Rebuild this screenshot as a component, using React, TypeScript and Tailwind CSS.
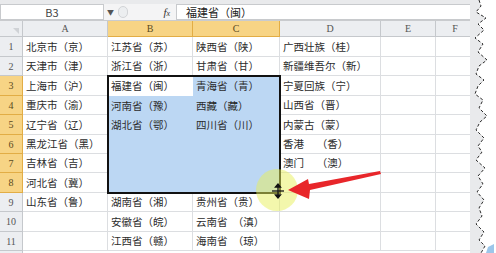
import React from "react";

type Row = { n: number; h: string; cells: string[] };

const cols = [
  { key: "A", w: "w-[85px]" },
  { key: "B", w: "w-[85px]" },
  { key: "C", w: "w-[87px]" },
  { key: "D", w: "w-[101px]" },
  { key: "E", w: "w-[55px]" },
  { key: "F", w: "w-[39px]" },
];

const rows: Row[] = [
  { n: 1, h: "h-[20px]", cells: ["北京市（京）", "江苏省（苏）", "陕西省（陕）", "广西壮族（桂）"] },
  { n: 2, h: "h-[19px]", cells: ["天津市（津）", "浙江省（浙）", "甘肃省（甘）", "新疆维吾尔（新）"] },
  { n: 3, h: "h-[20px]", cells: ["上海市（沪）", "福建省（闽）", "青海省（青）", "宁夏回族（宁）"] },
  { n: 4, h: "h-[19px]", cells: ["重庆市（渝）", "河南省（豫）", "西藏（藏）", "山西省（晋）"] },
  { n: 5, h: "h-[20px]", cells: ["辽宁省（辽）", "湖北省（鄂）", "四川省（川）", "内蒙古（蒙）"] },
  { n: 6, h: "h-[19px]", cells: ["黑龙江省（黑）", "", "", "香港\u3000 （香）"] },
  { n: 7, h: "h-[19px]", cells: ["吉林省（吉）", "", "", "澳门\u3000 （澳）"] },
  { n: 8, h: "h-[20px]", cells: ["河北省（冀）", "", "", ""] },
  { n: 9, h: "h-[19px]", cells: ["山东省（鲁）", "湖南省（湘）", "贵州省（贵）", ""] },
  { n: 10, h: "h-[20px]", cells: ["", "安徽省（皖）", "云南省\u3000（滇）", ""] },
  { n: 11, h: "h-[19px]", cells: ["", "江西省（赣）", "海南省\u3000（琼）", ""] },
];

function isSelected(r: number, c: number) {
  return r >= 3 && r <= 8 && (c === 1 || c === 2);
}

function FormulaBar() {
  return (
    <div className="flex h-[21px] w-[475px] items-stretch bg-[#e9eaec] pt-[4px] border-b border-[#c9cbce]">
      <div className="flex w-[104px] items-center justify-center border border-[#c8cacd] bg-white text-[11px] text-[#444]">
        B3
      </div>
      <div className="flex w-[72px] items-center bg-[#f4f4f5]">
        <span className="ml-[3px] text-[7px] text-[#555]">▼</span>
        <span className="ml-[4px] h-[12px] w-[10px] rounded-full border border-[#d2d4d7] bg-[#eceef0]" />
        <span className="ml-auto mr-[6px] font-['Liberation_Serif',serif] text-[11px] italic text-[#333]">
          f<span className="text-[8px]">x</span>
        </span>
      </div>
      <div className="flex flex-1 items-center border border-[#c8cacd] bg-white pl-[9px] text-[11px] text-[#222]">
        福建省（闽）
      </div>
    </div>
  );
}

function HeaderRow() {
  return (
    <div className="flex h-[16px]">
      <div className="flex w-[23px] items-end justify-end border-r border-b border-[#c5c8cc] bg-[#eceef1] pb-[2px] pr-[3px]">
        <span className="h-0 w-0 border-l-[6px] border-t-[6px] border-l-transparent border-t-[#cfd2d6]" />
      </div>
      {cols.map((c, i) => (
        <div
          key={c.key}
          className={
            c.w +
            " flex items-center justify-center border-r border-b font-['Liberation_Serif',serif] text-[10px] " +
            (i === 1 || i === 2
              ? "border-[#e2ad45] bg-[#f7d485] text-[#5a4a1e]"
              : "border-[#c5c8cc] bg-[#eceef1] text-[#555]")
          }
        >
          {c.key}
        </div>
      ))}
    </div>
  );
}

function SheetRow({ row }: { row: Row }) {
  const hl = row.n >= 3 && row.n <= 8;
  return (
    <div className={"flex " + row.h}>
      <div
        className={
          "flex w-[23px] items-center justify-center border-r border-b font-['Liberation_Serif',serif] text-[10px] " +
          (hl ? "border-[#e2ad45] bg-[#f7d485] text-[#5a4a1e]" : "border-[#c5c8cc] bg-[#eceef1] text-[#555]")
        }
      >
        {row.n}
      </div>
      {cols.map((c, ci) => {
        const sel = isSelected(row.n, ci) && !(row.n === 3 && ci === 1);
        return (
          <div
            key={c.key}
            className={
              c.w +
              " flex items-center overflow-visible whitespace-pre pl-[3px] text-[10.5px] text-[#2b2b2b] " +
              (sel ? "bg-[#bcd7f3] " : "bg-white ") +
              (isSelected(row.n, ci) ? "" : "border-r border-b border-[#dcdee1]")
            }
          >
            {row.cells[ci] ?? ""}
          </div>
        );
      })}
    </div>
  );
}

function TornEdge() {
  const pts =
    "479,0 481,6 476,12 486,18 478,24 484,30 475,38 483,44 478,52 487,60 479,66 476,74 484,80 478,86 475,94 483,100 479,108 487,116 480,122 476,130 484,138 478,146 482,152 476,160 485,168 478,176 483,184 477,192 484,200 479,208 482,216 476,224 484,232 479,240 485,246 481,253";
  return (
    <svg className="absolute right-0 top-0" width="496" height="253" viewBox="0 0 496 253">
      <polygon points={"470,0 " + pts + " 470,253"} fill="#e9eaec" />
      <polygon points={pts + " 496,253 496,0"} fill="#ffffff" />
      <polyline points={pts} fill="none" stroke="#2a2a2a" strokeWidth="1" strokeDasharray="3 2" />
      <path d="M488 247 l6 -3 l0 9 l-8 0z" fill="#9cc6ea" />
    </svg>
  );
}

function Overlay() {
  return (
    <svg className="absolute left-0 top-0" width="496" height="253" viewBox="0 0 496 253">
      <circle cx="277" cy="190" r="21" fill="#e7ef5a" fillOpacity="0.5" />
      <polygon points="380,171 309,184 308,179 288,190 309,199 310,190 381,174" fill="#e8262a" />
      <g stroke="#111" strokeWidth="1.3" fill="#111">
        <line x1="278" y1="185" x2="278" y2="197" />
        <line x1="272" y1="191" x2="284" y2="191" />
        <polygon points="275.5,187 278,184 280.5,187" />
        <polygon points="275.5,195 278,198 280.5,195" />
      </g>
    </svg>
  );
}

export default function App() {
  return (
    <div className="relative h-[253px] w-[496px] overflow-hidden bg-white font-['Noto_Sans_CJK_SC','Noto_Sans',sans-serif]">
      <FormulaBar />
      <div className="relative w-[475px]">
        <HeaderRow />
        {rows.map((r) => (
          <SheetRow key={r.n} row={r} />
        ))}
        <div className="flex h-[19px]">
          <div className="w-[23px] bg-[#eceef1] border-r border-[#c5c8cc]" />
          <div className="flex-1 bg-white" />
        </div>
        <div className="pointer-events-none absolute left-[107px] top-[54px] h-[119px] w-[174px] border-2 border-[#111]" />
      </div>
      <TornEdge />
      <Overlay />
    </div>
  );
}
